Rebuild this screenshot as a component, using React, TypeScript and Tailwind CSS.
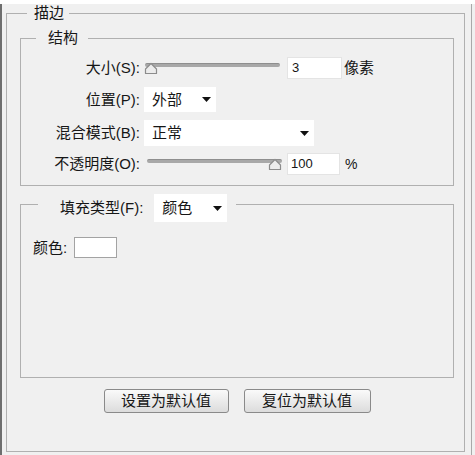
const font = "font-['Liberation_Sans','Noto_Sans_CJK_SC',sans-serif]";

function Arrow() {
  return (
    <svg width="9" height="5" viewBox="0 0 9 5" className="shrink-0">
      <path d="M0 0 H9 L4.5 5 Z" fill="#111" />
    </svg>
  );
}

function Thumb() {
  return (
    <svg width="14" height="13" viewBox="0 0 14 13">
      <path
        d="M1.5 11.5 V7 L7 1.5 L12.5 7 V11.5 Z"
        fill="#ececec"
        stroke="#8c8c8c"
        strokeWidth="1.2"
        strokeLinejoin="round"
      />
    </svg>
  );
}

function Slider({ width, trackLeft, thumbLeft }: { width: number; trackLeft: number; thumbLeft: number }) {
  return (
    <div className="relative h-[22px] shrink-0" style={{ width }}>
      <div
        className="absolute top-[6px] h-[4px] rounded-full bg-[#a8a8a8] border-t border-[#8e8e8e]"
        style={{ left: trackLeft, right: 0 }}
      />
      <div className="absolute top-[5px]" style={{ left: thumbLeft }}>
        <Thumb />
      </div>
    </div>
  );
}

function Select({ value, width, height }: { value: string; width: string; height: string }) {
  return (
    <div className={`flex items-center justify-between bg-white pl-[8px] pr-[5px] ${width} ${height}`}>
      <span>{value}</span>
      <Arrow />
    </div>
  );
}

export default function App() {
  return (
    <div className={`w-[475px] h-[455px] bg-[#f0f0f0] border-l-[2px] border-l-[#6e6e6e] border-b-[4px] border-b-[#5c5c5c] text-[15px] leading-[18px] text-[#161616] ${font}`}>
      <div className="h-full pl-[4px] pr-[3px]">
        <div className="h-full border-r border-[#a9a9a9] pr-[6px]">
          <fieldset className="mt-[4px] h-[448px] border border-[#b0b0b0]">
            <legend className="ml-[20px] pl-[7px] pr-[5px] h-[18px]">描边</legend>
            <div className="pl-[13px] pr-[10px]">
              <fieldset className="mt-[7px] border border-[#b0b0b0]">
                <legend className="ml-[15px] pl-[12px] pr-[10px] h-[18px]">结构</legend>
                <div className="pt-[10px] pb-[10px]">
                  <div className="flex items-center h-[22px]">
                    <div className="w-[119px] text-right">大小(S):</div>
                    <div className="ml-[4px]">
                      <Slider width={136} trackLeft={1} thumbLeft={0} />
                    </div>
                    <div className="ml-[7px] w-[55px] h-[22px] bg-white border border-[#e4e4e4] pl-[4px] flex items-center text-[13px]">3</div>
                    <div className="ml-[2px]">像素</div>
                  </div>
                  <div className="flex items-center h-[25px] mt-[8px]">
                    <div className="w-[119px] text-right">位置(P):</div>
                    <div className="ml-[4px]">
                      <Select value="外部" width="w-[72px]" height="h-[25px]" />
                    </div>
                  </div>
                  <div className="flex items-center h-[26px] mt-[8px]">
                    <div className="w-[119px] text-right">混合模式(B):</div>
                    <div className="ml-[4px]">
                      <Select value="正常" width="w-[170px]" height="h-[26px]" />
                    </div>
                  </div>
                  <div className="flex items-center h-[22px] mt-[7px]">
                    <div className="w-[119px] text-right">不透明度(O):</div>
                    <div className="ml-[4px]">
                      <Slider width={138} trackLeft={3} thumbLeft={124} />
                    </div>
                    <div className="ml-[5px] w-[53px] h-[22px] bg-white border border-[#e4e4e4] pl-[3px] flex items-center text-[13px]">100</div>
                    <div className="ml-[5px] text-[14px]">%</div>
                  </div>
                </div>
              </fieldset>

              <fieldset className="mt-[8px] border border-[#b0b0b0]">
                <legend className="ml-[17px] pl-[22px] pr-[9px] h-[20px] flex items-start">
                  <div className="h-[28px] flex items-center">填充类型(F):</div>
                  <div className="ml-[11px]">
                    <Select value="颜色" width="w-[73px]" height="h-[28px]" />
                  </div>
                </legend>
                <div className="pl-[12px] pt-[23px] pb-[119px] flex items-center">
                  <span>颜色:</span>
                  <div className="ml-[7px] w-[43px] h-[21px] bg-white border border-[#a3a3a3]" />
                </div>
              </fieldset>

              <div className="mt-[11px] flex justify-center gap-[15px]">
                <button className="w-[125px] h-[24px] rounded-[3px] border border-[#8a8a8a] bg-gradient-to-b from-[#fafafa] to-[#dcdcdc] text-[15px] leading-[18px]">
                  设置为默认值
                </button>
                <button className="w-[127px] h-[24px] rounded-[3px] border border-[#8a8a8a] bg-gradient-to-b from-[#fafafa] to-[#dcdcdc] text-[15px] leading-[18px]">
                  复位为默认值
                </button>
              </div>
            </div>
          </fieldset>
        </div>
      </div>
    </div>
  );
}
